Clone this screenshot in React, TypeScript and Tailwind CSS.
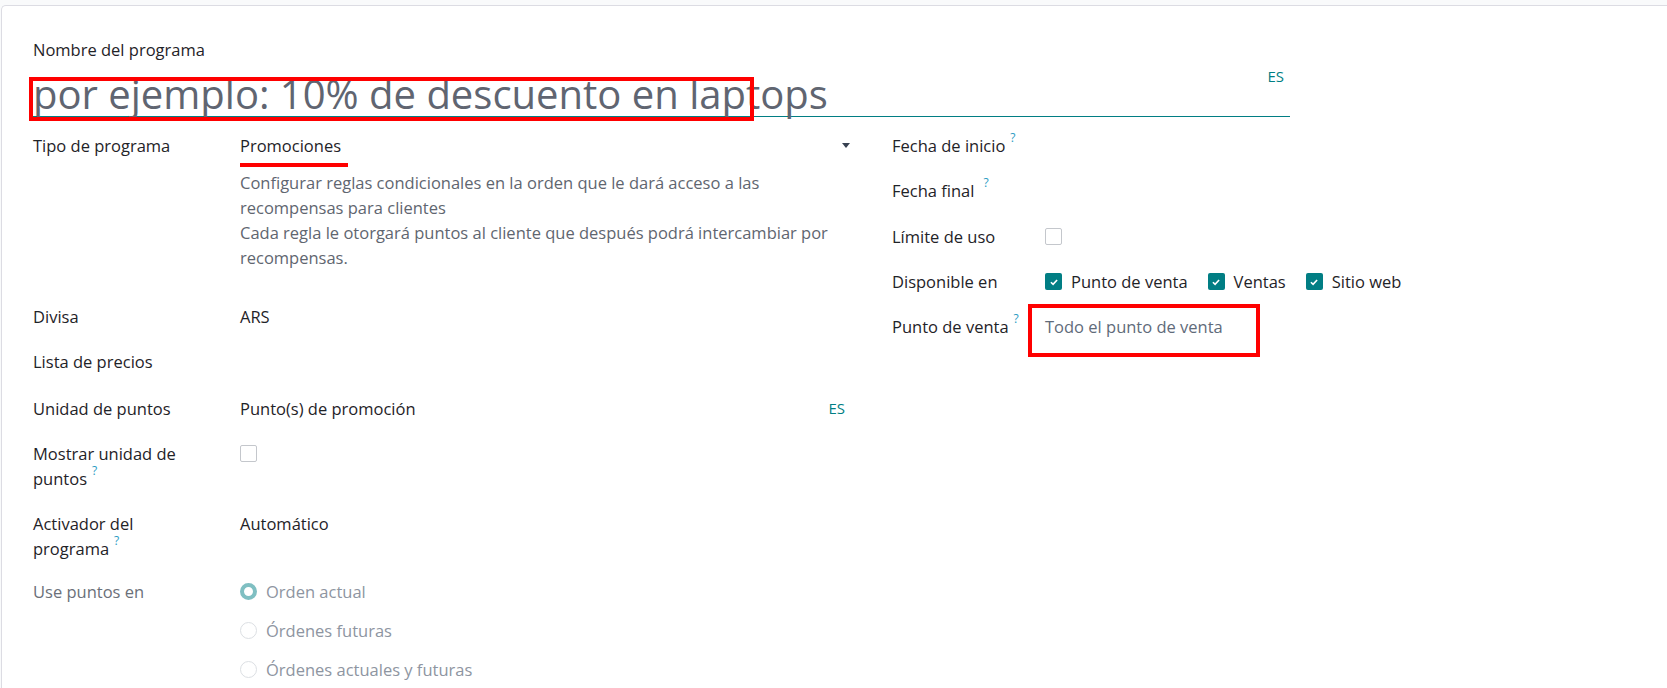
import React from 'react';

const Help = ({ gap = false }: { gap?: boolean }) => (
  <span className={`${gap ? 'ml-[9px]' : 'ml-[5px]'} inline-block align-top text-[12px] leading-none text-[#2b9cc3] -mt-[1px]`}>?</span>
);

const Check = ({ checked }: { checked?: boolean }) =>
  checked ? (
    <span className="w-[17px] h-[17px] shrink-0 bg-[#017e84] rounded-[2px] flex items-center justify-center">
      <svg viewBox="0 0 12 12" className="w-[10px] h-[10px]">
        <path d="M2.3 6.3 L4.9 8.7 L9.7 3.6" stroke="white" strokeWidth="2" fill="none" />
      </svg>
    </span>
  ) : (
    <span className="w-[17px] h-[17px] shrink-0 bg-white border border-[#c4c7cc] rounded-[2px] block" />
  );

const Radio = ({ checked, label }: { checked?: boolean; label: string }) => (
  <div className="flex items-center gap-[9px]">
    {checked ? (
      <span className="w-[17px] h-[17px] rounded-full border-[4px] border-[#7fbfc2] bg-white block" />
    ) : (
      <span className="w-[17px] h-[17px] rounded-full border border-[#dcdfe3] bg-white block" />
    )}
    <span className="text-[#8e95a1]">{label}</span>
  </div>
);

const Row = ({ label, labelW, children, className = '' }: { label: React.ReactNode; labelW: string; children?: React.ReactNode; className?: string }) => (
  <div className={`flex ${className}`}>
    <div className={`${labelW} shrink-0 text-[#1f2328]`}>{label}</div>
    <div className="flex-1 min-w-0">{children}</div>
  </div>
);

export default function App() {
  return (
    <div className="min-h-screen bg-[#f9fafb] pt-[5px] pl-[1px] font-['Open_Sans',sans-serif] text-[16.5px] leading-[25px]">
      <div className="bg-white border-l border-t border-[#dcdce3] rounded-tl-[5px] min-h-[683px] pl-[31px] pt-[31px]">
        <div className="text-[#1f2328]">Nombre del programa</div>

        <div className="relative w-[1257px] mt-[9px] border-b border-[#017e84] h-[46px]">
          <div className="text-[40px] leading-[45px] text-[#606571] whitespace-nowrap">
            por ejemplo: 10% de descuento en laptops
          </div>
          <span className="absolute right-[6px] -top-[5px] text-[15px] leading-5 text-[#017e84]">ES</span>
          <div className="absolute -left-[4px] top-[6px] w-[725px] h-[44px] border-[4px] border-[#ff0000]" />
        </div>

        <div className="flex mt-[16px]">
          {/* left group */}
          <div className="w-[818px] flex flex-col gap-[20px]">
            <Row label="Tipo de programa" labelW="w-[207px]" className="pb-[14px]">
              <div className="relative flex items-center justify-between text-[#1f2328]">
                <span>Promociones</span>
                <span className="w-0 h-0 border-l-[4px] border-r-[4px] border-t-[5px] border-l-transparent border-r-transparent border-t-[#374151] mr-[1px]" />
                <div className="absolute left-0 top-[30px] w-[108px] h-[4px] bg-[#ff0000]" />
              </div>
              <div className="mt-[12px] text-[#5f6670] pr-[8px]">
                Configurar reglas condicionales en la orden que le dará acceso a las recompensas para clientes
                <br />
                Cada regla le otorgará puntos al cliente que después podrá intercambiar por recompensas.
              </div>
            </Row>
            <Row label="Divisa" labelW="w-[207px]">
              <span className="text-[#1f2328]">ARS</span>
            </Row>
            <Row label="Lista de precios" labelW="w-[207px]" />
            <Row label="Unidad de puntos" labelW="w-[207px]" className="mt-[2px]">
              <div className="flex justify-between text-[#1f2328]">
                <span>Punto(s) de promoción</span>
                <span className="text-[15px] text-[#017e84] mr-[6px]">ES</span>
              </div>
            </Row>
            <Row
              label={
                <div>
                  <span>Mostrar unidad de</span>
                  <br />
                  <span>puntos</span>
                  <Help />
                </div>
              }
              labelW="w-[207px]"
            >
              <div className="pt-[4px]">
                <Check />
              </div>
            </Row>
            <Row
              label={
                <div>
                  <span>Activador del</span>
                  <br />
                  <span>programa</span>
                  <Help />
                </div>
              }
              labelW="w-[207px]"
            >
              <span className="text-[#1f2328]">Automático</span>
            </Row>
            <Row label={<span className="text-[#6b7079]">Use puntos en</span>} labelW="w-[207px]" className="-mt-[2px]">
              <div className="flex flex-col gap-[14px]">
                <Radio checked label="Orden actual" />
                <Radio label="Órdenes futuras" />
                <Radio label="Órdenes actuales y futuras" />
              </div>
            </Row>
          </div>

          {/* right group */}
          <div className="ml-[41px] w-[398px] flex flex-col gap-[20px]">
            <Row label={<>Fecha de inicio<Help /></>} labelW="w-[153px]" />
            <Row label={<>Fecha final<Help gap /></>} labelW="w-[153px]" />
            <Row label="Límite de uso" labelW="w-[153px]" className="mt-[1px]">
              <div className="pt-[4px]">
                <Check />
              </div>
            </Row>
            <Row label="Disponible en" labelW="w-[153px]">
              <div className="flex items-center text-[#1f2328] whitespace-nowrap">
                <Check checked />
                <span className="ml-[9px]">Punto de venta</span>
                <span className="ml-[20px]"><Check checked /></span>
                <span className="ml-[9px]">Ventas</span>
                <span className="ml-[20px]"><Check checked /></span>
                <span className="ml-[9px]">Sitio web</span>
              </div>
            </Row>
            <Row label={<>Punto de venta<Help /></>} labelW="w-[153px]">
              <div className="relative text-[#5f6b7a]">
                Todo el punto de venta
                <div className="absolute -left-[17px] -top-[10px] w-[232px] h-[53px] border-[4px] border-[#ff0000]" />
              </div>
            </Row>
          </div>
        </div>
      </div>
    </div>
  );
}
